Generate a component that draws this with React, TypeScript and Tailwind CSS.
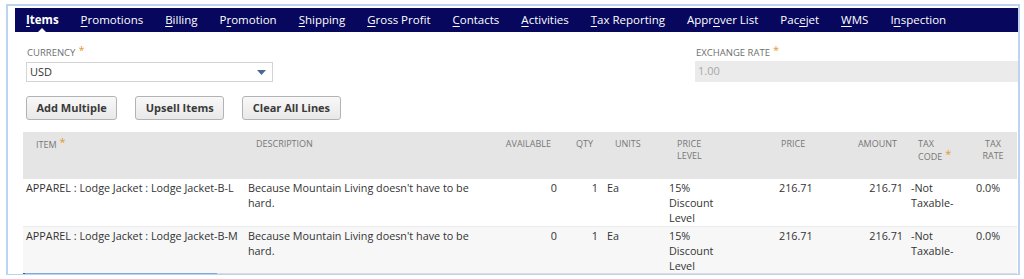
import React from "react";

type Tab = { pre: string; key: string; post: string; active?: boolean };

const tabs: Tab[] = [
  { pre: "", key: "I", post: "tems", active: true },
  { pre: "", key: "P", post: "romotions" },
  { pre: "", key: "B", post: "illing" },
  { pre: "P", key: "r", post: "omotion" },
  { pre: "", key: "S", post: "hipping" },
  { pre: "", key: "G", post: "ross Profit" },
  { pre: "", key: "C", post: "ontacts" },
  { pre: "", key: "A", post: "ctivities" },
  { pre: "", key: "T", post: "ax Reporting" },
  { pre: "Appr", key: "o", post: "ver List" },
  { pre: "Pac", key: "e", post: "jet" },
  { pre: "", key: "W", post: "MS" },
  { pre: "I", key: "n", post: "spection" },
];

const rows = [
  { item: "APPAREL : Lodge Jacket : Lodge Jacket-B-L", bg: "bg-white" },
  { item: "APPAREL : Lodge Jacket : Lodge Jacket-B-M", bg: "bg-[#f7f7f7] border-t border-[#ececec]" },
];

const Star = () => <span className="text-[#e39a2d] text-[11px] leading-none ml-[3px] relative -top-[2px]">*</span>;

const App: React.FC = () => {
  return (
    <div className="w-[1024px] h-[279px] bg-white pt-[4px] pl-[6px]" style={{ fontFamily: "'Open Sans', sans-serif" }}>
      <div className="w-[1014px] h-[271px] border-2 border-b border-[#bcd4ef] overflow-hidden flex flex-col">
        {/* Subtab bar */}
        <div className="mt-[2px] ml-[7px] h-[24px] bg-[#07075e] flex items-center shrink-0">
          {tabs.map((t) => (
            <div key={t.pre + t.key + t.post} className="relative h-full flex items-center px-[11px]">
              <span className={`text-white text-[11.5px] leading-none ${t.active ? "font-bold" : ""}`}>
                {t.pre}
                <span className="underline underline-offset-2">{t.key}</span>
                {t.post}
              </span>
              {t.active && (
                <span className="absolute bottom-0 left-1/2 -translate-x-1/2 w-0 h-0 border-l-[4px] border-r-[4px] border-b-[4px] border-l-transparent border-r-transparent border-b-white" />
              )}
            </div>
          ))}
        </div>

        {/* Fields */}
        <div className="flex mt-[14px] ml-[18px]">
          <div className="w-[247px]">
            <div className="text-[9.5px] leading-[12px] text-[#6f6f6f] pl-[1px]">
              CURRENCY<Star />
            </div>
            <div className="mt-[3px] h-[20px] border border-[#d4d4d4] flex items-center justify-between px-[3px]">
              <span className="text-[11px] text-[#333]">USD</span>
              <svg width="9" height="5" viewBox="0 0 9 5" className="mr-[3px]">
                <polygon points="0,0 9,0 4.5,5" fill="#4b6990" />
              </svg>
            </div>
          </div>
          <div className="ml-[422px] flex-1">
            <div className="text-[9.5px] leading-[12px] text-[#6f6f6f] pl-[1px]">
              EXCHANGE RATE<Star />
            </div>
            <div className="mt-[2px] h-[21px] bg-[#ebebeb] flex items-center px-[3px]">
              <span className="text-[11px] text-[#a8a8a8]">1.00</span>
            </div>
          </div>
        </div>

        {/* Buttons */}
        <div className="flex gap-[18px] mt-[14px] ml-[18px]">
          {["Add Multiple", "Upsell Items", "Clear All Lines"].map((b) => (
            <button
              key={b}
              className="h-[24px] px-[9.5px] rounded-[3px] border border-[#b3b3b3] bg-gradient-to-b from-[#f8f8f8] to-[#e9e9e9] text-[11px] font-bold text-[#3a3a3a]"
            >
              {b}
            </button>
          ))}
        </div>

        {/* Item sublist */}
        <div className="mt-[12px] ml-[15px] mr-[1px]">
          <div className="grid grid-cols-[223px_254px_61px_42px_62px_110px_70px_63px_64px_44px] h-[47px] bg-[#e5e5e5] text-[9px] leading-[12px] text-[#777] pt-[6px]">
            <div className="pl-[13px]">ITEM<Star /></div>
            <div className="pl-[10px]">DESCRIPTION</div>
            <div className="text-right pr-[10px]">AVAILABLE</div>
            <div className="text-right pr-[10px]">QTY</div>
            <div className="pl-[12px]">UNITS</div>
            <div className="pl-[12px]">PRICE<br />LEVEL</div>
            <div className="pl-[6px]">PRICE</div>
            <div className="text-right pr-[11px]">AMOUNT</div>
            <div className="pl-[10px]">TAX<br />CODE<Star /></div>
            <div className="text-center pr-[2px]">TAX<br />RATE</div>
          </div>
          {rows.map((r) => (
            <div
              key={r.item}
              className={`grid grid-cols-[223px_254px_61px_42px_62px_110px_70px_63px_64px_44px] h-[47px] pt-[1px] text-[10.8px] leading-[15px] text-[#333] ${r.bg}`}
            >
              <div className="pl-[3px] whitespace-nowrap">{r.item}</div>
              <div className="pl-[2px] pr-[20px]">Because Mountain Living doesn't have to be hard.</div>
              <div className="text-right pr-[4px]">0</div>
              <div className="text-right pr-[5px]">1</div>
              <div className="pl-[4px]">Ea</div>
              <div className="pl-[4px] w-[70px]">15% Discount Level</div>
              <div className="pl-[4px]">216.71</div>
              <div className="text-right pr-[5px]">216.71</div>
              <div className="pl-[3px]">-Not Taxable-</div>
              <div className="pl-[4px]">0.0%</div>
            </div>
          ))}
          <div className="flex h-[2px]">
            <div className="w-[2px] bg-[#555]" />
            <div className="w-[192px] bg-[#7ea9dc]" />
            <div className="flex-1 bg-[#dcdcdc]" />
          </div>
        </div>
      </div>
    </div>
  );
};

export default App;
